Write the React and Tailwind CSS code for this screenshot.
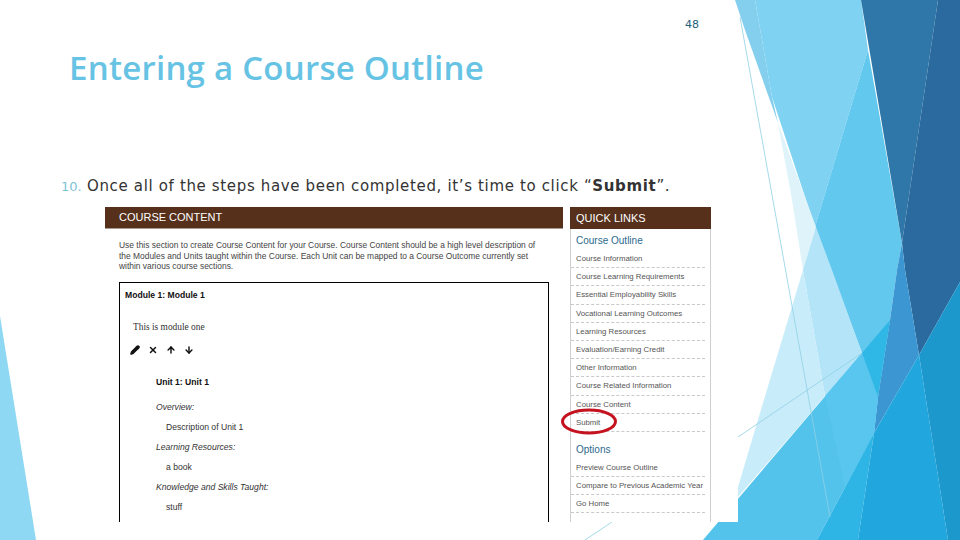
import { Pencil, X, ArrowUp, ArrowDown } from "lucide-react";

const facets = [
  ["0,316 36,540 0,540", "#8ed8f3"],
  ["735,0 755,0 772,97 778,123 745,30", "#85cfee"],
  ["755,0 861,0 868,50 815,227 772,97", "#7fd2f2"],
  ["868,50 902,243 897,270 890,320 878,397 862,353 815,227", "#62c8ee"],
  ["861,0 938,0 902,243", "#2f77a8"],
  ["938,0 960,0 960,282 919,355 905,270 902,243", "#2a6a9e"],
  ["902,243 905,270 919,355 874,433 878,397 890,320 897,270", "#3c96d2"],
  ["778,123 816,227 803,270 792,200", "#dff3fb"],
  ["816,227 832,270 862,353 825,396 803,270", "#b3e4f8"],
  ["803,270 825,396 738,497 738,487 757,423", "#c8ecf9"],
  ["862,353 878,397 874,433 817,540 703,540", "#53c3ec"],
  ["825,396 862,353 878,397 874,433 845,487", "#58c6ee"],
  ["862,353 890,320 878,397", "#2fb7e6"],
  ["874,433 858,540 817,540", "#2fb5e5"],
  ["919,355 948,540 858,540 874,433", "#21a7dd"],
  ["919,355 960,282 960,540 948,540", "#1c98cd"],
];

const quickLinks = [
  "Course Information",
  "Course Learning Requirements",
  "Essential Employability Skills",
  "Vocational Learning Outcomes",
  "Learning Resources",
  "Evaluation/Earning Credit",
  "Other Information",
  "Course Related Information",
  "Course Content",
  "Submit",
];

const options = ["Preview Course Outline", "Compare to Previous Academic Year", "Go Home"];

function LinkRow({ label, circled }) {
  return (
    <div className="relative h-[18.2px] mr-[5px] border-b border-dashed border-[#c9c9c9] pl-[5px] text-[7.8px] leading-[18px] text-[#555] whitespace-nowrap">
      {label}
      {circled && (
        <svg className="absolute left-[-11px] top-[-6px]" width="58" height="27" viewBox="0 0 58 27">
          <ellipse cx="29" cy="13.5" rx="26.5" ry="11.5" fill="none" stroke="#c4121f" strokeWidth="3" />
        </svg>
      )}
    </div>
  );
}

export default function App() {
  return (
    <div className="relative w-[960px] h-[540px] overflow-hidden bg-white font-['DejaVu_Sans',sans-serif]">
      <svg className="absolute inset-0" width="960" height="540" viewBox="0 0 960 540">
        {facets.map(([points, color]) => (
          <polygon key={points} points={points} fill={color} />
        ))}
        <g stroke="#8fd0e6" strokeWidth="0.8" fill="none">
          <line x1="740" y1="17" x2="830" y2="517" />
          <line x1="738" y1="437" x2="862" y2="353" />
          <line x1="612" y1="522" x2="585" y2="540" />
        </g>
      </svg>

      <div className="relative flex flex-col">
        <div className="h-[48px] pt-[17px] pr-[261px] text-right text-[11px] leading-[16px] text-[#1f5f7a]">48</div>
        <h1 className="h-[40px] pl-[69px] font-['Open_Sans',sans-serif] font-semibold text-[33px] tracking-[0.25px] leading-[40px] text-[#67c3e4]">
          Entering a Course Outline
        </h1>
        <div className="flex items-baseline h-[31px] mt-[87px] pl-[61px] text-[#333]">
          <span className="w-[26px] text-[13px] text-[#7cc4d8]">10.</span>
          <p className="text-[15px] tracking-[0.65px] whitespace-nowrap">
            Once all of the steps have been completed, it’s time to click “<b>Submit</b>”.
          </p>
        </div>

        <div className="flex gap-[7px] ml-[105px] w-[633px] h-[315px] mt-[1px] bg-white overflow-hidden font-['Liberation_Sans',sans-serif]">
          <div className="w-[458px] shrink-0">
            <div className="h-[22px] pl-[14px] bg-[#56301a] border-b border-[#a89a90] text-[11px] leading-[21px] text-white">
              COURSE CONTENT
            </div>
            <p className="mt-[11px] ml-[14px] w-[425px] text-[8.44px] leading-[10.6px] text-[#444]">
              Use this section to create Course Content for your Course. Course Content should be a high level description of
              the Modules and Units taught within the Course. Each Unit can be mapped to a Course Outcome currently set
              within various course sections.
            </p>
            <div className="mt-[10px] ml-[14px] w-[430px] h-[300px] border border-black pl-[5px] text-[8.6px] text-[#333]">
              <div className="mt-[7px] font-bold leading-[10px] text-[#111]">Module 1: Module 1</div>
              <div className="mt-[22px] ml-[8px] text-[9.4px] leading-[10px] font-['Liberation_Serif',serif]">This is module one</div>
              <div className="flex gap-[8px] mt-[13px] ml-[5px] text-[#111]">
                <Pencil size={10} strokeWidth={3} fill="#111" />
                <X size={10} strokeWidth={3.5} />
                <ArrowUp size={10} strokeWidth={3.5} />
                <ArrowDown size={10} strokeWidth={3.5} />
              </div>
              <div className="mt-[17px] ml-[31px] leading-[20px]">
                <div className="font-bold text-[#111]">Unit 1: Unit 1</div>
                <div className="mt-[5px] italic">Overview:</div>
                <div className="ml-[10px]">Description of Unit 1</div>
                <div className="italic">Learning Resources:</div>
                <div className="ml-[10px]">a book</div>
                <div className="italic">Knowledge and Skills Taught:</div>
                <div className="ml-[10px]">stuff</div>
              </div>
            </div>
          </div>

          <div className="w-[141px] shrink-0 border-x border-[#cfcfcf]">
            <div className="h-[22px] -mx-px pl-[6px] bg-[#56301a] text-[11px] leading-[22px] text-white">QUICK LINKS</div>
            <div className="pt-[5px]">
              <div className="h-[16px] pl-[5px] text-[10px] leading-[14px] text-[#2a6a8e]">Course Outline</div>
              {quickLinks.map((label) => (
                <LinkRow key={label} label={label} circled={label === "Submit"} />
              ))}
              <div className="h-[27px] pt-[10px] pl-[5px] text-[10px] leading-[16px] text-[#2a6a8e]">Options</div>
              {options.map((label) => (
                <LinkRow key={label} label={label} />
              ))}
            </div>
          </div>
        </div>
      </div>
    </div>
  );
}
